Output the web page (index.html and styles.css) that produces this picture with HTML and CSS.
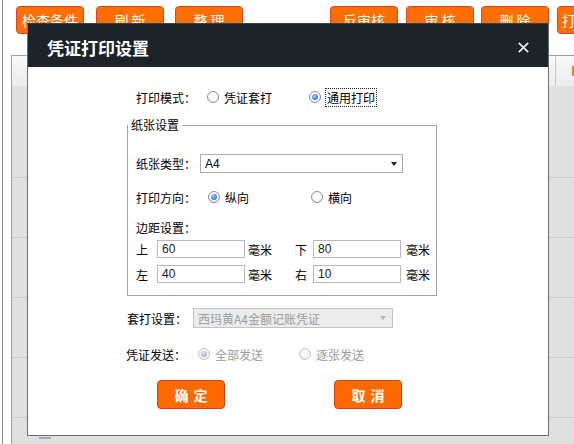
FILE: index.html
```html
<!DOCTYPE html>
<html lang="zh-CN">
<head>
<meta charset="utf-8">
<title>凭证打印设置</title>
<link rel="stylesheet" href="styles.css">
</head>
<body>
<div class="page">
  <div class="toolbar">
    <span class="tbtn">检查条件</span>
    <span class="tbtn b2">刷 新</span>
    <span class="tbtn b3">整 理</span>
    <span class="tbtn b4">反审核</span>
    <span class="tbtn">审 核</span>
    <span class="tbtn b6">删 除</span>
    <span class="tbtn last">打印</span>
  </div>
  <div class="grid">
    <div class="ghead"><div class="gmain"></div><div class="gside"><span class="hicon"></span></div></div>
    <div class="grow first"></div>
    <div class="grow"></div>
    <div class="grow"></div>
    <div class="grow"></div>
    <div class="grow"></div>
    <div class="grow"><span class="chk"></span></div>
  </div>
</div>

<div class="dialog">
  <div class="dlg-title">
    <span>凭证打印设置</span>
    <svg class="close" width="11" height="11" viewBox="0 0 11 11"><path d="M0.8 0.8 L10.2 10.2 M10.2 0.8 L0.8 10.2" stroke="#ececec" stroke-width="1.7" fill="none"/></svg>
  </div>
  <div class="dlg-body">
    <div class="row mode">
      <span class="lbl l-mode">打印模式：</span>
      <span class="opt o-mode"><span class="radio"></span>凭证套打</span>
      <span class="opt"><span class="radio on"></span><span class="focus">通用打印</span></span>
    </div>

    <fieldset class="paper">
      <legend>纸张设置</legend>
      <div class="row r-type">
        <span class="lbl l-type">纸张类型：</span>
        <div class="select"><span>A4</span><i class="caret"></i></div>
      </div>
      <div class="row r-dir">
        <span class="lbl l-dir">打印方向：</span>
        <span class="opt o-dir"><span class="radio on"></span>纵向</span>
        <span class="opt"><span class="radio"></span>横向</span>
      </div>
      <div class="row r-mtitle"><span class="lbl">边距设置：</span></div>
      <div class="margins r-top">
        <span class="side">上</span><span class="num">60</span><span class="unit u1">毫米</span>
        <span class="side">下</span><span class="num">80</span><span class="unit u2">毫米</span>
      </div>
      <div class="margins r-left">
        <span class="side">左</span><span class="num">40</span><span class="unit u1">毫米</span>
        <span class="side">右</span><span class="num">10</span><span class="unit u2">毫米</span>
      </div>
    </fieldset>

    <div class="row r-tpl">
      <span class="lbl l-tpl">套打设置：</span>
      <div class="select dis"><span>西玛黄A4金额记账凭证</span><i class="caret"></i></div>
    </div>
    <div class="row r-send">
      <span class="lbl l-send">凭证发送：</span>
      <span class="opt o-send dis"><span class="radio on dis"></span>全部发送</span>
      <span class="opt dis"><span class="radio dis"></span>逐张发送</span>
    </div>
    <div class="row r-btns">
      <span class="obtn ok">确定</span>
      <span class="obtn cancel">取消</span>
    </div>
  </div>
</div>
</body>
</html>
```

FILE: styles.css
```css
html, body {
  margin: 0;
  padding: 0;
}
body {
  width: 574px;
  height: 444px;
  overflow: hidden;
  position: relative;
  background: #ffffff;
  font-family: "Noto Sans CJK SC", "Noto Sans", sans-serif;
  font-size: 12px;
  color: #111;
}

/* background page */
.page {
  margin-left: 2px;
  border-left: 1px solid #8c8c8c;
  padding-left: 8px;
  height: 444px;
  box-sizing: border-box;
  overflow: hidden;
}
.toolbar {
  display: flex;
  gap: 8px;
  padding-top: 6px;
  margin-left: 5px;
}
.tbtn {
  flex: 0 0 68px;
  height: 28px;
  box-sizing: border-box;
  background: #ff6f00;
  border: 1px solid #d4452a;
  border-radius: 4px;
  color: #fff;
  font-size: 14px;
  line-height: 1;
  display: flex;
  align-items: center;
  justify-content: center;
  white-space: pre;
}
.tbtn.last {
  justify-content: flex-start;
  padding-left: 4px;
}
.b2 { margin-left: 4px; }
.b3 { margin-left: 3px; }
.b4 { margin-left: 79px; }
.b6 { margin-left: -1px; }

.grid {
  margin-top: 21px;
  border-top: 1px solid #a0a0a0;
  border-left: 1px solid #a0a0a0;
  width: 620px;
}
.ghead {
  height: 30px;
  display: flex;
  background: linear-gradient(#f8f8f9, #ebecee);
}
.gmain { width: 543px; }
.gside {
  flex: 1;
  border-left: 1px solid #c6c6c6;
  position: relative;
}
.hicon {
  position: absolute;
  left: 16px;
  top: 10px;
  width: 4px;
  height: 10px;
  background: #e8871e;
}
.grow {
  height: 59px;
  background: #e0e0e0;
  border-bottom: 1px solid #cdcdcd;
  position: relative;
}
.grow.first { height: 91px; }
.chk {
  position: absolute;
  left: 27px;
  top: 19px;
  width: 12px;
  height: 12px;
  border-top: 2px solid #a7a7c0;
  box-sizing: border-box;
}

/* dialog */
.dialog {
  position: absolute;
  left: 27px;
  top: 23px;
  width: 522px;
  height: 413px;
  box-sizing: border-box;
  border: 1px solid #6b6b6b;
  border-top-color: #3a4046;
  background: #fff;
}
.dlg-title {
  height: 43px;
  box-sizing: border-box;
  padding: 4px 19px 0 19px;
  background: #1c2329;
  color: #fff;
  font-size: 17px;
  font-weight: bold;
  display: flex;
  align-items: center;
  justify-content: space-between;
}
.close { display: block; }

.dlg-body {
  padding-top: 20px;
}
.row {
  display: flex;
  align-items: center;
  height: 20px;
  white-space: nowrap;
}
.lbl { flex: 0 0 auto; color: #000; }
.opt {
  display: flex;
  align-items: center;
  flex: 0 0 auto;
  color: #000;
}
.opt.dis { color: #9a9a9a; }

.radio {
  flex: 0 0 12px;
  width: 12px;
  height: 12px;
  box-sizing: border-box;
  border-radius: 50%;
  border: 1px solid #8e8e8e;
  background: radial-gradient(circle at 50% 40%, #ffffff 0, #ffffff 45%, #d9d9d9 100%);
  margin-right: 5px;
  position: relative;
}
.radio.on::after {
  content: "";
  position: absolute;
  left: 2px;
  top: 2px;
  width: 6px;
  height: 6px;
  border-radius: 50%;
  background: radial-gradient(circle at 40% 35%, #a9d0ff 0, #3b7ee0 60%, #1f5bb8 100%);
}
.radio.dis {
  border-color: #c4c4c4;
  background: radial-gradient(circle at 50% 40%, #ffffff 0, #f6f6f6 45%, #e4e4e4 100%);
}
.radio.on.dis::after {
  background: radial-gradient(circle at 40% 35%, #dfe6f5 0, #aab6d4 70%, #98a6c8 100%);
}
.focus {
  outline: 1px dotted #222;
  outline-offset: 0;
  padding: 0 1px;
}

/* row 1 */
.mode { margin-left: 108px; }
.l-mode { width: 71px; }
.o-mode { width: 102px; }

/* fieldset */
.paper {
  margin: 10px 0 0 99px;
  width: 310px;
  box-sizing: border-box;
  padding: 0 0 12px 0;
  border: 1px solid #a3a3a3;
  min-inline-size: 0;
}
.paper legend {
  padding: 0 3px;
  margin-left: 0;
  line-height: 16px;
  color: #000;
}
.r-type { margin: 21px 0 0 8px; height: 19px; }
.l-type { width: 64px; }
.select {
  width: 203px;
  height: 19px;
  box-sizing: border-box;
  border: 1px solid #ababab;
  background: #fff;
  display: flex;
  align-items: center;
  justify-content: space-between;
  padding: 0 5px 0 4px;
  font-family: "Liberation Sans", "Noto Sans CJK SC", sans-serif;
  font-size: 12px;
  color: #000;
}
.caret {
  width: 0;
  height: 0;
  border-left: 3.5px solid transparent;
  border-right: 3.5px solid transparent;
  border-top: 4px solid #222;
}
.r-dir { margin: 14px 0 0 8px; }
.l-dir { width: 72px; }
.o-dir { width: 103px; }
.r-mtitle { margin: 12px 0 0 8px; height: 16px; }

.margins {
  display: grid;
  grid-template-columns: 21px 88px 50px 18px 88px auto;
  align-items: center;
  height: 18px;
  margin-left: 8px;
  white-space: nowrap;
  color: #000;
}
.r-top { margin-top: 5px; }
.r-left { margin-top: 7px; }
.num {
  height: 18px;
  box-sizing: border-box;
  border: 1px solid #b8b8b8;
  padding-left: 4px;
  font-family: "Liberation Sans", sans-serif;
  font-size: 12px;
  line-height: 16px;
  color: #1a1a1a;
}
.u1 { padding-left: 3px; }
.u2 { padding-left: 5px; }

/* lower section */
.r-tpl { margin: 12px 0 0 99px; }
.l-tpl { width: 66px; }
.select.dis {
  width: 200px;
  height: 20px;
  background: #ececec;
  border-color: #c3c3c3;
  color: #9c9c9c;
  font-family: "Noto Sans CJK SC", sans-serif;
  padding-right: 6px;
}
.select.dis .caret { border-top-color: #b5b5b5; }
.r-send { margin: 16px 0 0 98px; }
.l-send { width: 72px; }
.o-send { width: 101px; }

.r-btns {
  margin: 16px 0 0 129px;
  height: 29px;
  gap: 109px;
}
.obtn {
  width: 68px;
  height: 29px;
  box-sizing: border-box;
  background: #ff6a00;
  border: 1px solid #d5401f;
  border-radius: 4px;
  color: #fff;
  font-size: 14px;
  font-weight: bold;
  letter-spacing: 5px;
  text-indent: 5px;
  display: flex;
  align-items: center;
  justify-content: center;
}
```
